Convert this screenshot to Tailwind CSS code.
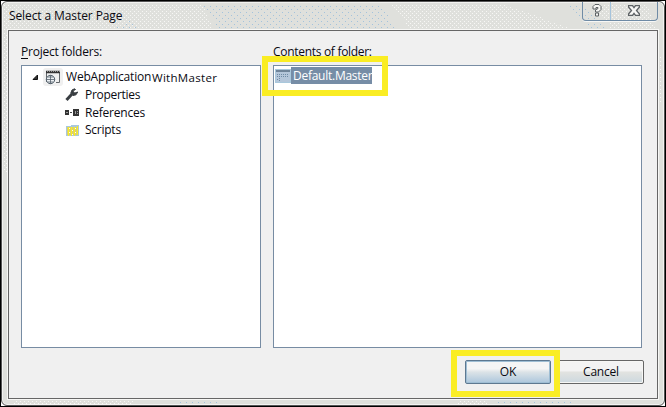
<!DOCTYPE html>
<html lang="en">
<head>
<meta charset="utf-8">
<title>Select a Master Page</title>
<script src="https://cdn.jsdelivr.net/npm/@tailwindcss/browser@4"></script>
</head>
<body class="w-[666px] h-[407px] overflow-hidden bg-black pt-px pl-px font-['Open_Sans','Noto_Sans',sans-serif] text-[12px] leading-[16px] text-[#0a0a12]">
<div class="relative w-[664px] h-[405px] bg-white">
<div class="relative w-[664px] h-[405px] rounded-[6px] border border-[#555] bg-[#dfe0dc] flex flex-col shadow-[inset_0_0_0_1px_#f3f3f1] overflow-hidden">
  <!-- speckled glass texture of the frame -->
  <svg class="absolute left-0 top-0" width="662" height="403" shape-rendering="crispEdges">
    <defs>
      <pattern id="b" width="6" height="6" patternUnits="userSpaceOnUse"><path d="M1 1h1v1h-1zM4 4h1v1h-1z" fill="#a4c3dc"/></pattern>
      <pattern id="w" width="4" height="4" patternUnits="userSpaceOnUse"><path d="M0 1h1v1h-1zM2 3h1v1h-1z" fill="#f7f7f5"/></pattern>
    </defs>
    <path d="M2 2H200L212 28H2zM388 3H502L575 28H410zM592 3H645L654 28H610z" fill="url(#w)"/>
    <path d="M110 28L128 19L138 28zM199 3H380L395 28H218zM567 4H584L605 28H588z" fill="url(#b)"/>
    <path d="M2 30H6V170H2zM657 55H660V100H657zM12 399H132V402H12zM455 399H485V402H455z" fill="url(#w)"/>
    <path d="M176 399H220V402H176zM495 399H570V402H495z" fill="url(#b)"/>
  </svg>
  <header class="relative h-[28px] shrink-0 flex justify-between pl-[7px] pr-[6px]">
    <h1 class="pt-[6px] text-[12px] tracking-[-0.1px] whitespace-nowrap">Select a Master Page</h1>
    <div class="w-[76px] h-[19px] flex border border-t-0 border-[#6f8ba5] rounded-b-[4px] shadow-[0_1px_0_#f7f7f5]">
      <div class="w-[28px] border-r border-[#a4c3dc] flex justify-center pt-[2px]">
        <svg width="10" height="13" viewBox="0 0 10 13"><path d="M1 2.5L3 .5H7L9 2.5V5.5L6.5 8H3.5V6L6 4.5V3.5H4V5H1zM3.5 9H6.5V12H3.5z" fill="#f7f7f5" stroke="#5d6265"/></svg>
      </div>
      <div class="flex-1 flex justify-center pt-[3px]">
        <svg width="12" height="11" viewBox="0 0 12 11"><path d="M.5 .5H4.5L6 2.6L7.5 .5H11.5V2L8.5 5.5L11.5 9V10.5H7.5L6 8.4L4.5 10.5H.5V9L3.5 5.5L.5 2Z" fill="#f7f7f5" stroke="#5d6265" stroke-width="1.3"/></svg>
      </div>
    </div>
  </header>
  <main class="relative ml-[6px] w-[650px] h-[369px] shrink-0 border border-[#666] bg-[#f0f0f0] shadow-[0_0_0_1px_#f7f7f5] pl-[12px] pt-[13px]">
    <div class="flex gap-[12px]">
      <section class="w-[240px]">
        <h2 class="h-[21px] tracking-[-0.22px]"><span class="underline underline-offset-2">P</span>roject folders:</h2>
        <div class="h-[283px] bg-white border border-[#778ca3] pt-[2px]">
          <div class="h-[18px] flex items-center">
            <svg class="ml-[10px] shrink-0" width="7" height="7"><path d="M5.5 1V5.5H1z" fill="#333" stroke="#111"/></svg>
            <div class="ml-[4px] w-[20px] h-[18px] shrink-0 bg-[#f0f0f0] rounded-[3px] pl-[2px] pt-[2px]">
              <svg width="16" height="15" viewBox="0 0 16 15" fill="none"><path d="M1.5 2V12M14.5 2V12.5H11" stroke="#62676b"/><path d="M1 2H15" stroke="#333" stroke-width="2.6"/><path d="M2 1.5H15" stroke="#999" stroke-dasharray="1 1"/><circle cx="5.5" cy="9.5" r="4.2" fill="#edf1f4" stroke="#54606b"/><path d="M1 9.5H10M5.5 5V14M2.5 7H8.5M2.5 12H8.5" stroke="#54606b" stroke-width=".8"/></svg>
            </div>
            <span class="-mt-px ml-[3px] w-[86px] tracking-[-0.18px] whitespace-nowrap">WebApplication</span><span class="pt-px text-[11.5px] tracking-[0.3px] whitespace-nowrap">WithMaster</span>
          </div>
          <div class="h-[18px] pl-[43px] flex items-center gap-[7px]">
            <svg width="13" height="14" viewBox="0 0 13 14"><path d="M1.5 12L7 6" stroke="#393e42" stroke-width="3"/><path d="M9.5 .8L7 2L5.8 5L8 7.5L11 6.8L12.7 4L10 5L8 4.2L8.6 2.6L10.5 1.5Z" fill="#393e42" stroke="#393e42"/></svg>
            <span class="-mt-px tracking-[-0.3px]">Properties</span>
          </div>
          <div class="h-[18px] pl-[43px] flex items-center gap-[6px]">
            <svg class="-mt-[2px]" width="14" height="7" shape-rendering="crispEdges"><path d="M0 1H4V6H0zM8 0H14V7H8z" fill="#333"/><path d="M5 3H7V4H5z" fill="#444"/><path d="M1 3H3V4H1zM10 2H11V5H10zM12 2H13V3H12zM12 4H13V5H12z" fill="#999"/></svg>
            <span class="-mt-px tracking-[-0.2px]">References</span>
          </div>
          <div class="h-[18px] pl-[44px] flex items-center gap-[6px]">
            <svg class="-mt-px" width="13" height="12" shape-rendering="crispEdges"><path d="M5 0H13V11H0V1H5z" fill="#a9c8dc"/><path d="M1 2H11V10H1z" fill="#d9d070"/><path d="M2.5 2V11M5.5 2V11M8.5 2V11M11.5 1V10" stroke="#f9ed24"/><path d="M3 3H4V4H3zM6 5H7V6H6zM9 3H10V4H9zM3 7H4V8H3zM6 9H7V10H6zM9 7H10V8H9z" fill="#fff"/></svg>
            <span class="-mt-[2px] tracking-[-0.25px]">Scripts</span>
          </div>
        </div>
      </section>
      <section class="w-[369px]">
        <h2 class="h-[21px] tracking-[-0.3px]">Contents of folder:</h2>
        <div class="h-[283px] bg-white border border-[#778ca3] pt-px pl-px">
          <div class="flex items-center">
            <svg class="shrink-0" width="16" height="14" shape-rendering="crispEdges"><path d="M0 0H16V14H0z" fill="#a9c8dc"/><path d="M1 1H15V13H1z" fill="#b4c6da"/><path d="M1 1H15V3H1z" fill="#6f8499"/><path d="M2 5.5H14M2 7.5H14M2 10.5H4M4.5 5V12" stroke="#6f8ba5" stroke-dasharray="1 1"/></svg>
            <span class="w-[81px] h-[17px] pl-[2px] pt-px leading-[15px] bg-[#768da6] text-white tracking-[-0.26px] whitespace-nowrap">Default.Master</span>
          </div>
        </div>
      </section>
    </div>
    <div class="mt-[12px] ml-[444px] flex gap-[7px]">
      <button class="w-[86px] h-[24px] rounded-[2px] border border-[#5d7890] bg-linear-to-b from-[#f5f5f5] from-35% via-[#dce3e7] via-50% to-[#abc6dc] shadow-[inset_0_0_0_1px_#9fbed4]">OK</button>
      <button class="w-[86px] h-[24px] rounded-[2px] border border-[#666] bg-linear-to-b from-[#f3f3f3] from-45% via-[#e2e3e0] via-50% to-[#ccd8df] shadow-[inset_0_0_0_1px_#f7f7f5] tracking-[-0.2px]">Cancel</button>
    </div>
  </main>
</div>
<!-- highlight frames over the selection and the OK button -->
<div class="absolute left-[261px] top-[55px] w-[126px] h-[40px] border-[6px] border-[#faed24]"></div>
<div class="absolute left-[450px] top-[349px] w-[109px] h-[47px] border-[6px] border-[#faed24]"></div>
</div>
</body>
</html>
